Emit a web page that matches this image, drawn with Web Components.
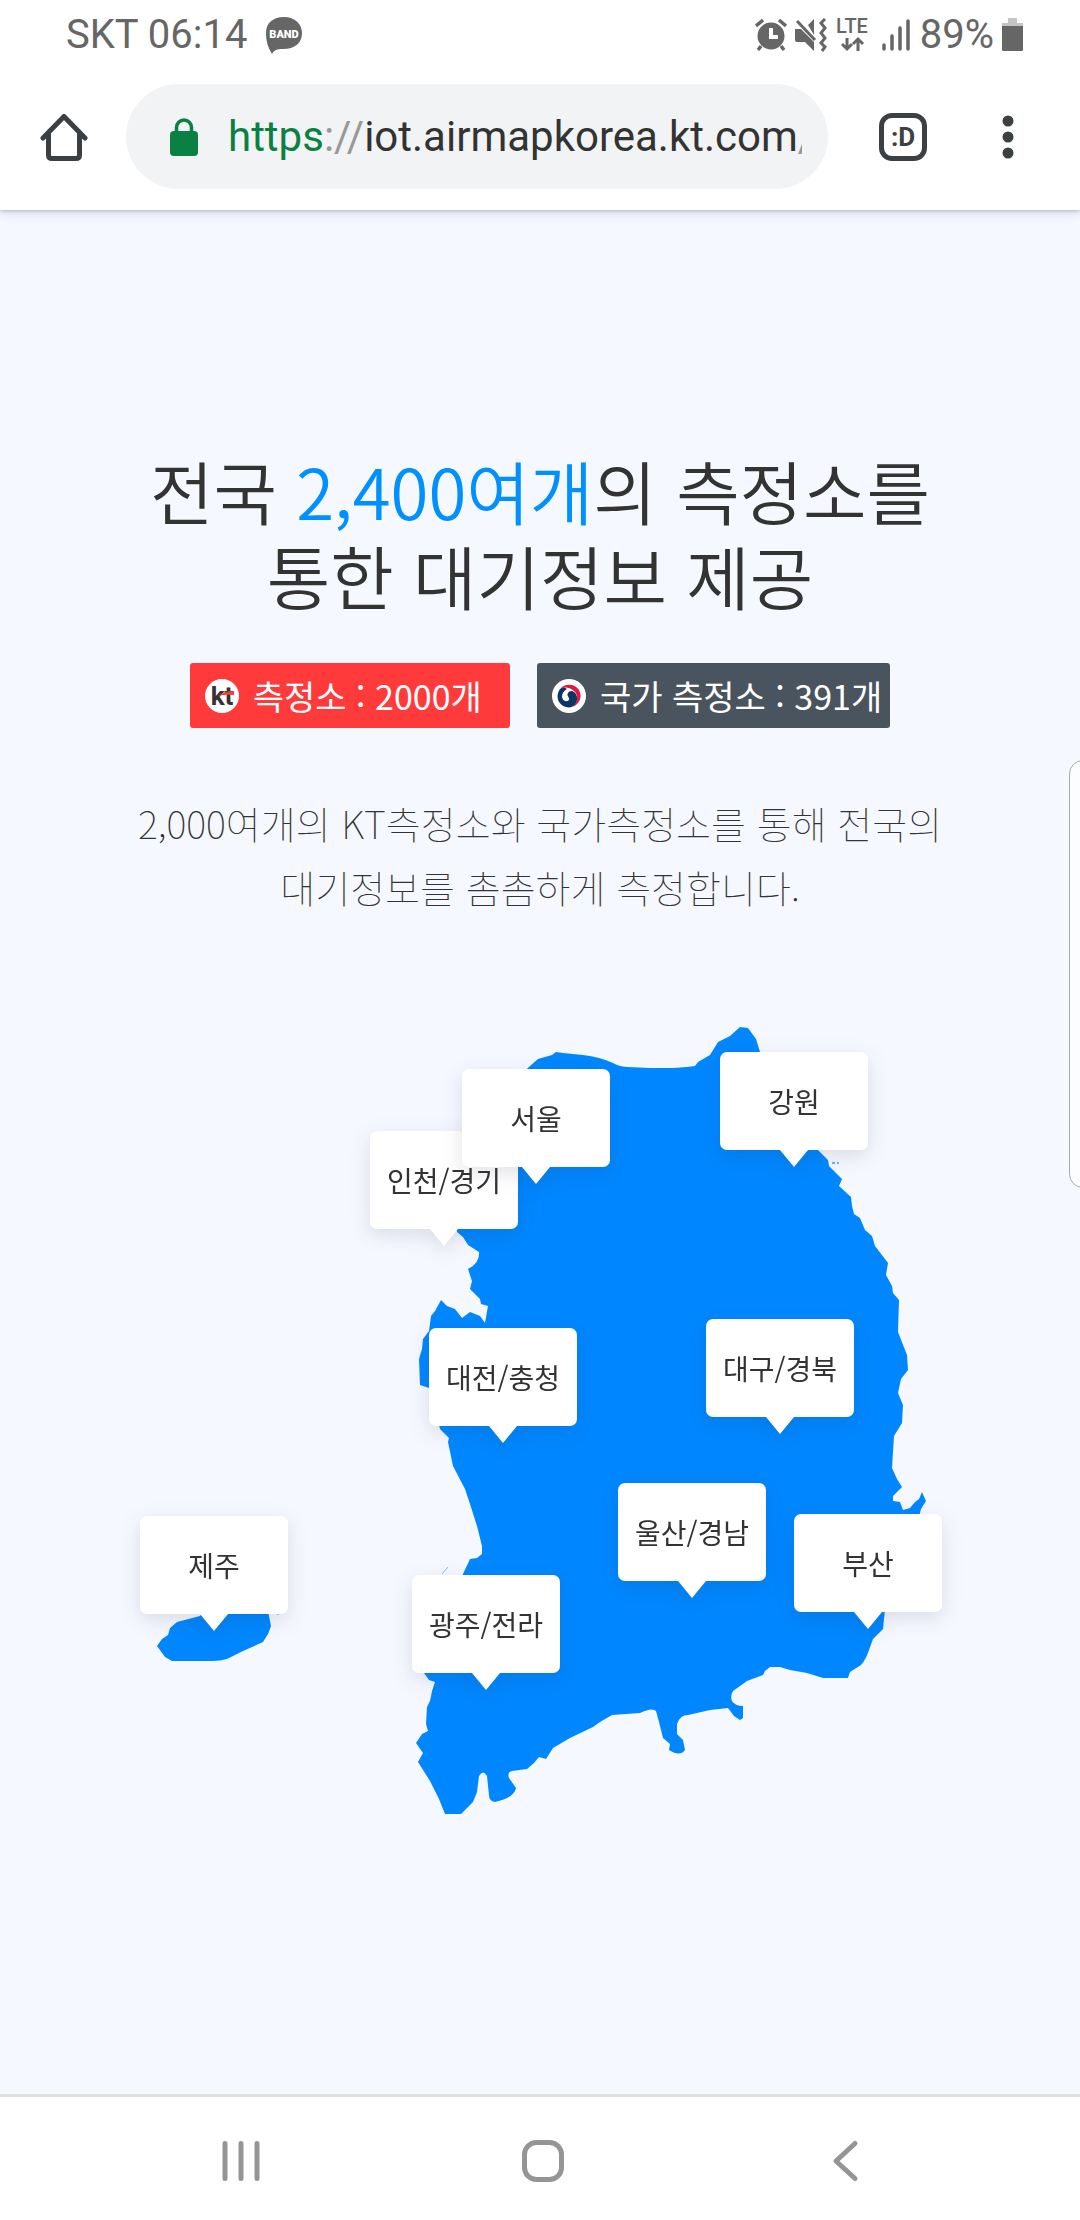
<!DOCTYPE html>
<html lang="ko">
<head>
<meta charset="utf-8">
<meta name="viewport" content="width=device-width, initial-scale=1">
<title>AirMap Korea</title>
<style>
  body {
    margin: 0;
    font-family: "Noto Sans CJK KR", sans-serif;
    color: #333;
    background: #f5f8ff;
  }
</style>
</head>
<body>
<phone-screen>
  <status-bar slot="top"></status-bar>
  <browser-bar slot="top"></browser-bar>
  <station-intro>
    <span slot="title">전국 <em>2,400여개</em>의 측정소를<br>통한 대기정보 제공</span>
    <station-badge slot="badges" kind="kt">측정소 : 2000개</station-badge>
    <station-badge slot="badges" kind="gov">국가 측정소 : 391개</station-badge>
    <span slot="text">2,000여개의 KT측정소와 국가측정소를 통해 전국의<br>대기정보를 촘촘하게 측정합니다.</span>
  </station-intro>
  <korea-map>
    <map-pin x="324" y="237">인천/경기</map-pin>
    <map-pin x="416" y="175">서울</map-pin>
    <map-pin x="674" y="158">강원</map-pin>
    <map-pin x="383" y="434">대전/충청</map-pin>
    <map-pin x="660" y="425">대구/경북</map-pin>
    <map-pin x="572" y="589">울산/경남</map-pin>
    <map-pin x="748" y="620">부산</map-pin>
    <map-pin x="366" y="681">광주/전라</map-pin>
    <map-pin x="94" y="622">제주</map-pin>
  </korea-map>
  <nav-bar slot="bottom"></nav-bar>
</phone-screen>

<script>
function define(name, html, setup) {
  const template = document.createElement("template");
  template.innerHTML = html;

  customElements.define(name, class extends HTMLElement {
    constructor() {
      super();
      this.attachShadow({ mode: "open" });
    }

    connectedCallback() {
      if (this.shadowRoot.childNodes.length) return;
      this.shadowRoot.append(template.content.cloneNode(true));
      if (setup) setup(this);
    }
  });
}

define("phone-screen", `
  <style>
    :host {
      display: flex;
      flex-direction: column;
      min-height: 100vh;
      position: relative;
      overflow: hidden;
    }
    main {
      flex: 1;
      padding: 238px 120px 0;
    }
    /* edge panel handle, half off the right side */
    .edge {
      position: absolute;
      top: 760px;
      right: -21px;
      width: 30px;
      height: 426px;
      border: 1px solid #aaabb0;
      border-radius: 14px;
      background: #fcfdff;
    }
  </style>
  <slot name="top"></slot>
  <main><slot></slot></main>
  <div class="edge"></div>
  <slot name="bottom"></slot>
`);

define("status-bar", `
  <style>
    :host {
      display: flex;
      align-items: center;
      justify-content: space-between;
      height: 68px;
      box-sizing: border-box;
      padding: 2px 56px 0 66px;
      font: 40px/66px Roboto, sans-serif;
      color: #666;
      background: #fff;
      position: relative;
      z-index: 1;
    }
    div { display: flex; align-items: center; }
    svg { display: block; fill: #666; }
    .left { gap: 18px; }
    .right { gap: 8px; }
    .level { margin: 0 1px 0 4px; }
  </style>
  <div class="left">
    <span>SKT 06:14</span>
    <svg width="38" height="38" viewBox="0 0 38 38">
      <path d="M19 1C30 1 37 8 37 17C37 27 30 33 18 33C12 33 9 34 7 38C4 33 1 27 1 17C1 7 8 1 19 1Z"/>
      <text x="19" y="22" text-anchor="middle" font-family="Roboto" font-weight="900" font-size="11" fill="#fff">BAND</text>
    </svg>
  </div>
  <div class="right">
    <svg width="32" height="34" viewBox="0 0 32 34">
      <circle cx="16" cy="18" r="13.5"/>
      <path d="M1 8L8 2M31 8L24 2M6 28L3 32M26 28L29 32" stroke="#666" stroke-width="3.5"/>
      <path d="M16 10V19H23" fill="none" stroke="#fff" stroke-width="4"/>
    </svg>
    <svg width="32" height="34" viewBox="0 0 32 34">
      <path d="M0 11H6L19 24V33L10 24H2Q0 24 0 22ZM13 7L19 1V17Z"/>
      <path d="M2 3L20 22" stroke="#666" stroke-width="3"/>
      <path d="M30 1L26 5L30 10L26 15L30 20L26 25L30 29L27 33" fill="none" stroke="#666" stroke-width="3"/>
    </svg>
    <svg width="34" height="44" viewBox="-1 -5 34 44">
      <text x="16" y="15" text-anchor="middle" font-family="Roboto" font-weight="500" font-size="20">LTE</text>
      <path d="M11 20V31M6 26L11 31L16 26M22 33V21M17 26L22 21L27 26" fill="none" stroke="#666" stroke-width="3"/>
    </svg>
    <svg class="level" width="30" height="34" viewBox="0 0 30 34">
      <path d="M3 27V31M11 18V31M19 10V31M27 3V31" stroke="#666" stroke-width="3.5" stroke-linecap="round"/>
    </svg>
    <span>89%</span>
    <svg width="22" height="34" viewBox="0 0 22 34">
      <path d="M6 0H15V5H21V10H0V5H6Z" fill="#c4c4c4"/>
      <path d="M0 8H21V32Q21 33 20 33H1Q0 33 0 32Z"/>
    </svg>
  </div>
`);

define("browser-bar", `
  <style>
    :host {
      display: flex;
      align-items: center;
      height: 142px;
      box-sizing: border-box;
      padding: 0 44px 5px 36px;
      background: #fff;
      position: relative;
      box-shadow: 0 1px 3px rgba(60, 64, 80, .25), 0 2px 12px rgba(60, 64, 110, .18);
    }
    button {
      display: flex;
      justify-content: center;
      align-items: center;
      width: 56px;
      height: 64px;
      padding: 0;
      border: 0;
      background: none;
    }
    .url {
      flex: 1;
      min-width: 0;
      display: flex;
      align-items: center;
      gap: 29px;
      height: 105px;
      box-sizing: border-box;
      margin: 0 51px 0 34px;
      padding: 0 26px 0 43px;
      border-radius: 53px;
      background: #f1f3f4;
      font: 42px/60px Roboto, sans-serif;
    }
    .url svg { flex: none; }
    a {
      flex: 1;
      overflow: hidden;
      white-space: nowrap;
      color: #333;
      text-decoration: none;
    }
    .scheme { color: #0b8043; }
    .dim { color: #96989a; }
    .tabs {
      width: 48px;
      height: 48px;
      border: 5px solid #3c4043;
      border-radius: 13px;
      color: #3c4043;
      font: bold 26px/28px "Roboto", sans-serif;
    }
    .menu { margin-left: 53px; }
  </style>
  <button aria-label="홈">
    <svg width="48" height="48" viewBox="0 0 48 48" fill="none" stroke="#3c4043" stroke-width="5" stroke-linejoin="round" stroke-linecap="round">
      <path d="M3 25L24 3.5L45 25M8.500 21V42Q8.500 45.500 12 45.500H36Q39.500 45.500 39.500 42V21"/>
    </svg>
  </button>
  <div class="url">
    <svg width="30" height="38" viewBox="0 0 30 38">
      <rect x="1" y="13" width="28" height="25" rx="4" fill="#0b8043"/>
      <path d="M7.500 15V9.500a7.500 7.500 0 0 1 15 0V15" fill="none" stroke="#0b8043" stroke-width="3.500"/>
    </svg>
    <a href="https://iot.airmapkorea.kt.com/"><span class="scheme">https</span><span class="dim">://</span>iot.airmapkorea.kt.com<span class="dim">/</span></a>
  </div>
  <button class="tabs" aria-label="탭">:D</button>
  <button class="menu" aria-label="메뉴">
    <svg width="12" height="44" viewBox="0 0 12 44" fill="#3c4043">
      <circle cx="6" cy="6" r="5.500"/><circle cx="6" cy="22" r="5.500"/><circle cx="6" cy="38" r="5.500"/>
    </svg>
  </button>
`);

define("station-intro", `
  <style>
    :host { display: block; text-align: center; }
    h1 {
      margin: 0;
      font-size: 69px;
      line-height: 85px;
      font-weight: 350;
      white-space: nowrap;
    }
    ::slotted(span) { display: block; }
    .badges {
      display: flex;
      justify-content: center;
      gap: 27px;
      margin: 45px 0 63px;
    }
    p {
      display: flex;
      justify-content: center;
      margin: 0;
      font-size: 38px;
      line-height: 64px;
      font-weight: 100;
      white-space: nowrap;
    }
  </style>
  <h1><slot name="title"></slot></h1>
  <div class="badges"><slot name="badges"></slot></div>
  <p><slot name="text"></slot></p>
`, (el) => {
  const accent = el.querySelector("em");
  accent.style.cssText = "display: inline-block; font-style: normal; color: #0090ff";
});

define("station-badge", `
  <style>
    :host {
      display: flex;
      align-items: center;
      gap: 14px;
      height: 65px;
      box-sizing: border-box;
      padding: 0 28px 0 15px;
      border-radius: 3px;
      background: #ff3a3a;
      color: #fff;
      font-size: 34px;
      line-height: 64px;
      white-space: nowrap;
    }
    :host([kind="gov"]) { padding-right: 8px; background: #4a545e; }
    svg { display: none; }
    :host([kind="kt"]) .kt, :host([kind="gov"]) .gov { display: block; }
  </style>
  <svg class="kt" width="34" height="34" viewBox="0 0 34 34">
    <circle cx="17" cy="17" r="17" fill="#fff"/>
    <text x="17" y="26" text-anchor="middle" font-family="Roboto" font-weight="700" font-size="26" fill="#333">kt</text>
    <path d="M13 17Q19 12 29 12V16Q20 15 13 17Z" fill="#ff3a3a"/>
  </svg>
  <svg class="gov" width="34" height="34" viewBox="0 0 34 34">
    <circle cx="17" cy="17" r="17" fill="#fff"/>
    <!-- red crescent, then the navy swirl with a white curl inside -->
    <path d="M9 9C14 4 23 5 27 11C31 18 27 26 20 28C26 24 27 16 22 12C18 8 13 8 9 9Z" fill="#e4173e"/>
    <path d="M8 10C3 17 6 26 14 28C21 30 26 24 25 18C24 12 18 10 16 14C14 17 18 18 17 21C15 24 10 22 10 18C10 14 12 12 15 10C12 8 10 8 8 10Z" fill="#0b3563"/>
    <path d="M8 11C5 17 7 24 13 27L18 25L17 21C15 24 10 22 10 18Z" fill="#0b3563"/>
  </svg>
  <span><slot></slot></span>
`);

define("korea-map", `
  <style>
    :host {
      display: block;
      position: relative;
      margin-top: 90px;
      aspect-ratio: 840 / 820;
    }
    svg { display: block; width: 100%; height: 100%; }
  </style>
  <svg viewBox="120 1010 840 820" fill="#0087ff">
    <path d="M530 1067L538 1060L552 1056L556 1053L563 1054L583 1056Q600 1058 613 1064Q620 1068 628 1068L650 1069L673 1069L687 1068L695 1067L698 1063L710 1056L718 1043L730 1037L740 1028L748 1029L756 1040L760 1053L815 1148L828 1161L829 1167L842 1180L839 1187L851 1198L852 1207L854 1215L860 1219L865 1231L872 1237L875 1247L888 1264L886 1276L892 1287L893 1294L899 1301L898 1333L907 1356L908 1371L901 1380L898 1394L903 1406L902 1424L894 1437L892 1469L897 1480L902 1488L893 1497L893 1502L900 1503L903 1511L910 1509L915 1503L919 1500L922 1493L926 1502L921 1510L919 1518L885 1610L883 1630L873 1640C869 1650 867 1660 861 1666L850 1673L848 1679L823 1679L807 1674L790 1671L780 1668L770 1668L765 1672L763 1676L747 1682L733 1692Q730 1697 732 1702Q735 1707 743 1707L743 1719L740 1721L734 1717L728 1709L710 1711L688 1716Q680 1716 677 1725L677 1735L683 1741L685 1751Q680 1758 669 1751L670 1745L663 1739L659 1723L656 1712Q652 1708 640 1714L612 1716L600 1723L593 1728L570 1739L553 1749L546 1760L539 1758L534 1764L527 1770L512 1772Q507 1773 509 1779L516 1789Q514 1799 495 1803Q489 1802 489 1796L487 1777Q483 1770 479 1777L477 1793L473 1803L461 1815H445L439 1800L430 1782L418 1763L423 1754L416 1744L422 1735L428 1732L426 1725L427 1708L430 1702L432 1692L435 1683L429 1681L424 1674L463 1575L470 1560L477 1559L482 1555L482 1547L477 1527L470 1505L465 1490L453 1467L448 1443L449 1439L440 1430L429 1389L420 1386L419 1360L422 1350L423 1340L429 1332L431 1317L435 1312L441 1301L447 1307L455 1310L462 1319L470 1313L480 1317L485 1324L488 1307L481 1305L480 1300L470 1290L472 1282L468 1270Q480 1264 479 1253L468 1246L463 1238L457 1233L455 1225L475 1120Z"/>
    <path d="M268 1612L271 1627L268 1635L263 1643L243 1652L227 1660Q220 1662 213 1662H172L165 1658L157 1647L162 1640L168 1636L170 1629L177 1623L200 1617L210 1600H260Z"/>
    <path d="M832 1163h3v2h-3zM837 1163h2v2h-2z" opacity=".6"/>
    <path d="M442 1575L448 1568" stroke="#0087ff" stroke-width="1" opacity=".5"/>
    <circle cx="278" cy="1615" r="1" opacity=".5"/>
  </svg>
  <slot></slot>
`);

define("map-pin", `
  <style>
    :host {
      position: absolute;
      transform: translate(-50%, -100%);
      filter: drop-shadow(0 6px 10px rgba(40, 40, 70, .13));
    }
    button {
      display: block;
      width: 148px;
      height: 98px;
      padding: 0;
      border: 0;
      border-radius: 7px;
      background: #fff;
      color: #333;
      font: inherit;
      font-size: 28px;
      line-height: 40px;
    }
    i {
      display: block;
      width: 28px;
      height: 17px;
      margin: 0 auto;
      background: #fff;
      clip-path: polygon(0 0, 100% 0, 50% 100%);
    }
  </style>
  <button><slot></slot></button>
  <i></i>
`, (el) => {
  el.style.left = `${el.getAttribute("x") / 840 * 100}%`;
  el.style.top = `${el.getAttribute("y") / 820 * 100}%`;
});

define("nav-bar", `
  <style>
    :host {
      display: grid;
      grid-template-columns: repeat(3, 1fr);
      height: 126px;
      box-sizing: border-box;
      padding: 0 84px 0 90px;
      border-top: 3px solid #dfe0e2;
      background: #fff;
    }
    button {
      display: flex;
      align-items: center;
      justify-content: center;
      padding: 4px 0 0;
      border: 0;
      background: none;
    }
    svg { fill: none; stroke: #959595; stroke-width: 5; stroke-linecap: round; stroke-linejoin: round; }
  </style>
  <button aria-label="최근 앱">
    <svg width="44" height="44" viewBox="0 0 44 44"><path d="M6 4.500V39.500M22 4.500V39.500M38 4.500V39.500"/></svg>
  </button>
  <button aria-label="홈 화면">
    <svg width="44" height="44" viewBox="0 0 44 44"><rect x="3.500" y="3.500" width="37" height="37" rx="12"/></svg>
  </button>
  <button aria-label="뒤로">
    <svg width="44" height="44" viewBox="0 0 44 44"><path d="M32 4.500L13 22L32 39.500"/></svg>
  </button>
`);
</script>
</body>
</html>
